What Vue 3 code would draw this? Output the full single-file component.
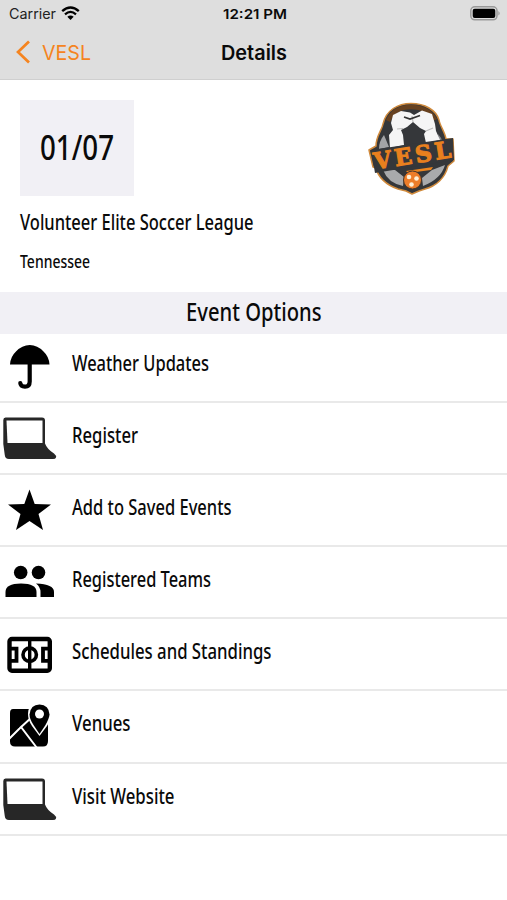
<script setup>
import { h } from 'vue'

// One line of condensed text, fitted to a given width.
const FitText = (props) =>
  h('svg', { width: props.w, height: props.size, class: 'fit', 'font-size': props.size }, [
    h('text', { x: 0, y: props.size * 0.8, fill: 'currentColor', textLength: props.w, lengthAdjust: 'spacingAndGlyphs' }, props.text),
  ])
FitText.props = ['text', 'w', 'size']

const options = [
  { icon: 'umbrella', label: 'Weather Updates', w: 137 },
  { icon: 'laptop', label: 'Register', w: 66 },
  { icon: 'star', label: 'Add to Saved Events', w: 159.5 },
  { icon: 'people', label: 'Registered Teams', w: 139 },
  { icon: 'pitch', label: 'Schedules and Standings', w: 199.5 },
  { icon: 'map', label: 'Venues', w: 58.5 },
  { icon: 'laptop', label: 'Visit Website', w: 102.5 },
]
</script>

<template>
  <div class="screen">
    <header class="top">
      <div class="status">
        <div class="side">
          <FitText class="carrier" text="Carrier" :w="47" :size="14" />
          <svg class="wifi" width="19" height="15" viewBox="0 0 19 15">
            <path d="M1.2 5.2Q9.5-2.2 17.8 5.2" fill="none" stroke="#000" stroke-width="2.4" />
            <path d="M4 8.3Q9.5 3.5 15 8.3" fill="none" stroke="#000" stroke-width="2.3" />
            <path d="M6.3 10.7Q9.5 8.1 12.7 10.7L9.5 14Z" />
          </svg>
        </div>
        <FitText class="clock" text="12:21 PM" :w="64" :size="13.5" />
        <div class="side end">
          <svg width="31" height="15" viewBox="0 0 31 15">
            <rect x=".8" y=".8" width="26.2" height="13" rx="4" fill="none" stroke="#999" stroke-width="1.5" />
            <rect x="2.7" y="2.7" width="22.6" height="9.3" rx="2" />
            <path d="M28.4 5Q31 7.3 28.4 9.6Z" fill="#999" />
          </svg>
        </div>
      </div>
      <nav class="nav">
        <div class="side back">
          <svg width="15" height="24" viewBox="0 0 15 24">
            <path d="M13 1.5L2 12L13 22.5" fill="none" stroke="#f5841f" stroke-width="2.7" />
          </svg>
          <FitText class="back-label" text="VESL" :w="49" :size="20.5" />
        </div>
        <FitText class="title" text="Details" :w="66" :size="20.5" />
        <div class="side"></div>
      </nav>
    </header>

    <section class="event">
      <div class="summary">
        <div class="date"><FitText text="01/07" :w="74" :size="34" /></div>
        <svg class="logo" width="90" height="96" viewBox="0 0 90 96">
          <path d="M45 3.500C59 3.500 70 10 73 20C74 26 79 32 80 39L87 39L88 61L82 66C79 78 70 86 59 89L53 91L46 94L40 91L32 89C20 85 12 77 10 68L7 67L3 50L10 46C10 36 16 30 17 24C20 10 32 3.500 45 3.500Z" fill="#35373a" stroke="#d08a3c" stroke-width="1.500" stroke-linejoin="round" />
          <path d="M22 21Q28 7 45 7Q62 7 69 20" fill="none" stroke="#67411f" stroke-width="4.500" />
          <path d="M18 35Q13 41 13 49L23 47Z" fill="#a3a4a6" />
          <path d="M72 34Q76 38 77 43L73 43Z" fill="#85878a" />
          <path d="M17 70L29 70L38 77L37 86Q22 83 17 70ZM56 78L66 70L79 65Q75 79 57 86Z" fill="#a9aaac" />
          <path d="M27 15L35 11L44 12.500L48 15L56 10.500L66 14L69 24L70 31L74 40L60 43L58 34L60 31L54 28L47 22L41 27L35 30L37 35L38 45L24 48L23 35L27 30L25 23Z" fill="#f5f5f5" />
          <path d="M31 29L37 28.500M60 31L67 28M46 16L47 22" fill="none" stroke="#bdbdbd" stroke-width="1.200" />
          <path d="M38 17L44 19L54 15.500" fill="none" stroke="#333" stroke-width="1.800" />
          <path d="M5 50L87 38L88 60L9 73Z" fill="#35373a" />
          <text x="9" y="69.500" transform="rotate(-9 9 69.500)" class="logo-word" textLength="78" lengthAdjust="spacing">VESL</text>
          <path d="M40 71L67 67L65 70L42 73Z" fill="#ed851f" />
          <circle cx="46.500" cy="80" r="9" fill="#ed7d2a" stroke="#493629" />
          <circle cx="43" cy="77" r="2.300" fill="#fff0d8" />
          <circle cx="50.500" cy="78.500" r="2.300" fill="#fff0d8" />
          <circle cx="45.500" cy="84.500" r="2.300" fill="#fff0d8" />
        </svg>
      </div>
      <FitText class="name" text="Volunteer Elite Soccer League" :w="233.500" :size="22" />
      <FitText class="place" text="Tennessee" :w="70" :size="18" />
    </section>

    <h2 class="heading"><FitText text="Event Options" :w="135.500" :size="25.5" /></h2>

    <ul class="options">
      <li v-for="o in options" :key="o.label">
        <svg class="icon" width="60" height="60" viewBox="0 0 60 60">
          <g v-if="o.icon === 'umbrella'">
            <path d="M10 21.500Q10.500 13.500 16 8.500Q22 2 29.800 2Q37.500 2 43.500 8.500Q49 13.500 49.500 21.500Z" />
            <path d="M29.700 20V38.500Q29.700 43.700 25 43.700Q20.500 43.700 20.300 40" fill="none" stroke="#000" stroke-width="4.200" stroke-linecap="round" />
          </g>
          <g v-else-if="o.icon === 'laptop'">
            <path d="M5.500 2.500H42Q45 2.500 45 5.500V28.500Q47 34 54 38.500Q56.500 40.500 56 42.500Q55.500 44 53 44H9Q5 44 4.700 39.500L3.300 29V5Q3.300 2.500 5.500 2.500Z" fill="#272727" />
            <path d="M6.500 5.500H42.500V28H7.500Z" fill="#fff" />
          </g>
          <path v-else-if="o.icon === 'star'" d="M29.500 2.500L34.700 17L51 17.500L38.500 27L43 43L29.500 34L16 43L20.500 27L8 17.500L24.300 17Z" />
          <g v-else-if="o.icon === 'people'">
            <circle cx="20.700" cy="13.500" r="6.800" />
            <circle cx="38.500" cy="13.500" r="6.800" />
            <path d="M5.500 38V33Q5.500 24.500 21 24.500Q36.500 24.500 36.500 33V38Z" />
            <path d="M36 24.500Q54 25 54 33V38H40.500V33Q40.500 28 36 24.500Z" />
          </g>
          <g v-else-if="o.icon === 'pitch'" fill="none" stroke="#000">
            <rect x="9.500" y="8" width="40.300" height="31.700" rx="2.500" stroke-width="4.400" />
            <path d="M29.700 7.500V39.500" stroke-width="3.400" />
            <circle cx="29.700" cy="23.800" r="6.700" stroke-width="3.600" />
            <path d="M11 17.700H16.500V29.900H11M48.500 17.700H43V29.900H48.500" stroke-width="3.800" />
          </g>
          <g v-else>
            <path d="M13 6H48V38Q48 43.500 43 43.500H15Q10 43.500 10 38.500V10Q10 6 13 6Z" />
            <path d="M8 37L21 24L37 45M19.500 25.500L32 14" fill="none" stroke="#fff" stroke-width="2" />
            <path d="M39.500 33L32 23Q28 17 28 11Q28 0 39.500 0Q51 0 51 11Q51 17 47 23Z" fill="#fff" />
            <path d="M39.500 31L33.500 22Q29.500 16 29.500 11.500Q30.500 1.500 39.500 1.500Q49 2 49.500 11.500Q49 16 45.500 22Z" />
            <circle cx="39.500" cy="11" r="4.500" fill="#fff" />
          </g>
        </svg>
        <FitText class="label" :text="o.label" :w="o.w" :size="21.500" />
      </li>
    </ul>
  </div>
</template>

<style>
body { margin: 0; background: #fff; }
</style>

<style scoped>
.screen { width: 507px; height: 900px; overflow: hidden; background: #fff; color: #0a0a0a; font-family: "Noto Sans", sans-serif; font-weight: 500; }
.fit { display: block; overflow: visible; flex: none; }
.top { height: 80px; box-sizing: border-box; background: #dedede; border-bottom: 1px solid #cfcfcf; font-family: Inter, sans-serif; }
.status { display: flex; height: 28px; padding: 6px 6px 0 9px; box-sizing: border-box; }
.side { flex: 1; display: flex; }
.end { justify-content: flex-end; }
.carrier { margin-top: 2px; font-weight: 400; color: #222; }
.wifi { margin-left: 5px; }
.clock { margin-top: 2px; font-weight: 600; }
.nav { display: flex; align-items: flex-start; padding: 12px 16px 0; }
.back-label { font-weight: 400; color: #f5841f; margin: 3.5px 0 0 11px; }
.title { font-weight: 600; margin-top: 3.5px; }
.event { height: 212px; box-sizing: border-box; padding: 20px 51px 0 20px; }
.summary { display: flex; justify-content: space-between; height: 96px; }
.date { width: 114px; height: 96px; display: flex; justify-content: center; padding-top: 32.5px; box-sizing: border-box; background: #f1f0f5; }
.logo-word { font-family: "DejaVu Serif", serif; font-weight: 700; font-size: 23px; fill: #e9801e; stroke: #e9801e; stroke-width: 1px; }
.name { margin-top: 16px; }
.place { margin-top: 20px; }
.heading { display: flex; justify-content: center; margin: 0; height: 42px; padding-top: 9px; box-sizing: border-box; background: #f1f0f5; font-weight: 500; }
.options { list-style: none; margin: -3px 0 0; padding: 0; }
.options li { display: flex; height: 72.1px; box-sizing: border-box; border-bottom: 2px solid #e9e9e9; }
.icon { margin-top: 12px; flex: none; }
.label { margin: 23px 0 0 11.5px; }
</style>
